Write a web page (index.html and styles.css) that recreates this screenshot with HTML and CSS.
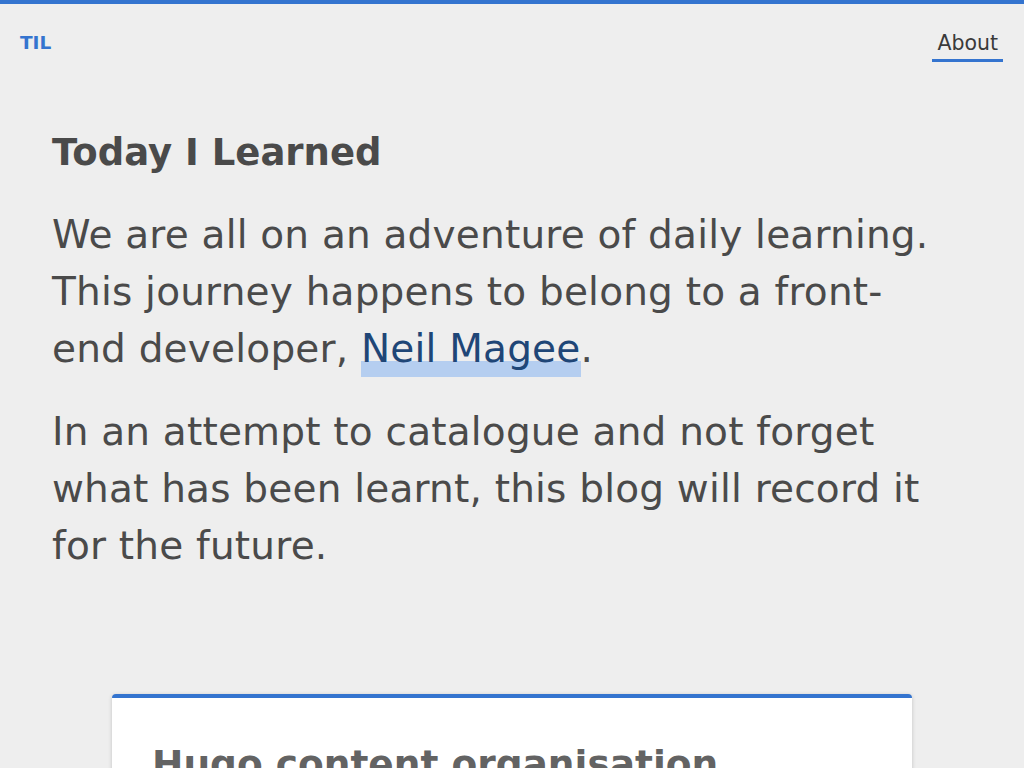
FILE: index.html
```html
<!DOCTYPE html>
<html lang="en">
<head>
<meta charset="utf-8">
<title>TIL</title>
<link rel="stylesheet" href="styles.css">
</head>
<body>
<header class="site-header">
  <a class="brand" href="#">TIL</a>
  <nav class="nav">
    <a class="nav-link" href="#">About</a>
  </nav>
</header>
<main class="main">
  <section class="intro">
    <h1 class="intro-title">Today I Learned</h1>
    <p class="intro-text">We are all on an adventure of daily learning. This journey happens to belong to a front-end developer, <a class="highlight-link" href="#">Neil Magee</a>.</p>
    <p class="intro-text">In an attempt to catalogue and not forget what has been learnt, this blog will record it for the future.</p>
  </section>
  <article class="post-card">
    <h2 class="post-title">Hugo content organisation</h2>
  </article>
</main>
</body>
</html>
```
FILE: styles.css
```css
html, body {
  margin: 0;
  padding: 0;
}
body {
  background: #eeeeee;
  border-top: 4px solid #3474cf;
  font-family: "DejaVu Sans", sans-serif;
  color: #4a4a4a;
  min-height: 764px;
}
.site-header {
  display: flex;
  justify-content: space-between;
  align-items: flex-start;
  padding: 24px 21px 0 20px;
}
.brand {
  font-weight: bold;
  font-size: 18.5px;
  line-height: 30px;
  color: #3474cf;
  text-decoration: none;
}
.nav {
  display: flex;
}
.nav-link {
  display: block;
  font-size: 20.5px;
  line-height: 30px;
  color: #3a3a3a;
  text-decoration: none;
  padding: 0 5px 1px;
  border-bottom: 3px solid #3474cf;
}
.main {
  padding: 0 52px;
}
.intro {
  max-width: 890px;
  margin-top: 69px;
}
.intro-title {
  margin: 0 0 31px;
  font-size: 37px;
  line-height: 44px;
  font-weight: bold;
  color: #4a4a4a;
}
.intro-text {
  margin: 0 0 26px;
  font-size: 39px;
  line-height: 57px;
  letter-spacing: 0.2px;
}
.highlight-link {
  color: #1f4677;
  text-decoration: none;
  background: linear-gradient(to bottom, transparent calc(100% - 10px), #b5cef0 calc(100% - 10px));
  box-shadow: 0 6px 0 #b5cef0;
}
.post-card {
  width: 800px;
  margin: 120px auto 0;
  box-sizing: border-box;
  background: #ffffff;
  border-top: 4px solid #3474cf;
  border-radius: 4px;
  box-shadow: 0 1px 4px rgba(0, 0, 0, 0.18);
  padding: 44px 40px 40px;
}
.post-title {
  margin: 0;
  font-size: 37.5px;
  line-height: 44px;
  font-weight: bold;
  color: #636363;
}
```
